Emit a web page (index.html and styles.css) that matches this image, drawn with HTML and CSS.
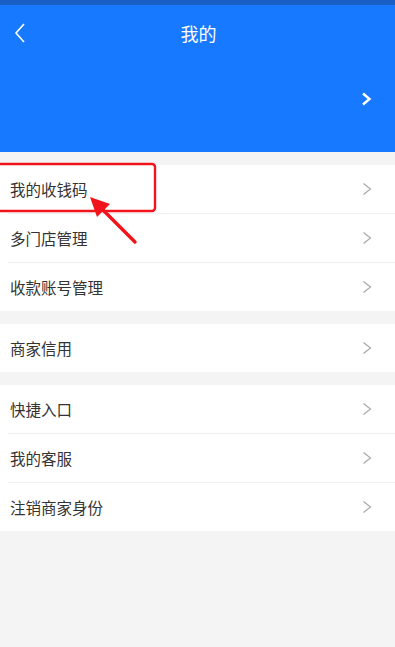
FILE: index.html
```html
<!DOCTYPE html>
<html lang="zh">
<head>
  <meta charset="UTF-8" />
  <title>我的</title>
  <link rel="stylesheet" href="styles.css">
</head>
<body>
  <div class="status"></div>
  <div class="header">
    <div class="nav">
      <svg class="back" width="14" height="22" viewBox="0 0 14 22"><polyline points="11,2 3,11 11,20" fill="none" stroke="#fff" stroke-width="1.6"/></svg>
      <div class="title">我的</div>
    </div>
    <div class="profile">
      <svg width="12" height="14" viewBox="0 0 12 14"><polyline points="2,1.5 8.5,7 2,12.5" fill="none" stroke="#fff" stroke-width="2.4"/></svg>
    </div>
  </div>

  <div class="group">
    <div class="row"><span>我的收钱码</span><i class="arrow"></i></div>
    <div class="row"><span>多门店管理</span><i class="arrow"></i></div>
    <div class="row"><span>收款账号管理</span><i class="arrow"></i></div>
  </div>
  <div class="group">
    <div class="row"><span>商家信用</span><i class="arrow"></i></div>
  </div>
  <div class="group">
    <div class="row"><span>快捷入口</span><i class="arrow"></i></div>
    <div class="row"><span>我的客服</span><i class="arrow"></i></div>
    <div class="row"><span>注销商家身份</span><i class="arrow"></i></div>
  </div>

  <svg class="mark" width="395" height="260" viewBox="0 0 395 260">
    <rect x="-10" y="164" width="165" height="47" rx="3" fill="none" stroke="#f2141b" stroke-width="2.4"/>
    <line x1="135" y1="242" x2="100" y2="207" stroke="#f2141b" stroke-width="3.4" stroke-linecap="round"/>
    <polygon points="90,197 110,204 97,217" fill="#f2141b"/>
  </svg>

  <script>
    document.querySelectorAll('.arrow').forEach(function (el) {
      el.innerHTML = '<svg width="10" height="14" viewBox="0 0 10 14"><polyline points="1.5,1.5 8.5,7 1.5,12.5" fill="none" stroke="#a8a8a8" stroke-width="1.2"/></svg>';
    });
  </script>
</body>
</html>
```

FILE: styles.css
```css
body {
  margin: 0;
  padding: 0;
  font-family: "Noto Sans CJK SC", "Liberation Sans", sans-serif;
  background-color: #f4f4f4;
  color: #333;
  width: 395px;
  height: 647px;
  overflow: hidden;
  position: relative;
}

.status {
  height: 5px;
  background-color: #1a5fc6;
}

.header {
  background-color: #1779ff;
  height: 147px;
  color: #fff;
}

.nav {
  height: 56px;
  display: flex;
  align-items: center;
  justify-content: center;
  position: relative;
}

.back {
  position: absolute;
  left: 13px;
  top: 17px;
}

.title {
  font-size: 18px;
  line-height: 1;
  margin-left: 2px;
}

.profile {
  height: 76px;
  display: flex;
  align-items: center;
  justify-content: flex-end;
  padding-right: 22px;
}

.group {
  background-color: #fff;
  margin-top: 13px;
}

.row {
  height: 48px;
  display: flex;
  align-items: center;
  justify-content: space-between;
  padding: 0 22px 0 10px;
  font-size: 15.5px;
  position: relative;
}

.row + .row {
  border-top: 1px solid #efefef;
  margin-left: 8px;
  padding-left: 2px;
}

.arrow {
  display: flex;
  align-items: center;
  padding-right: 1px;
}

.mark {
  position: absolute;
  left: 0;
  top: 0;
  pointer-events: none;
}
```
